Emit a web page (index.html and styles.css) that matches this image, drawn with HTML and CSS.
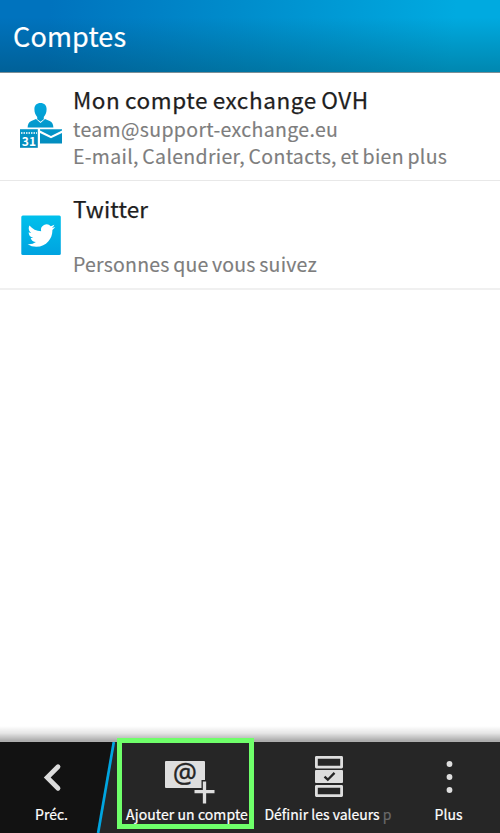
FILE: index.html
```html
<!DOCTYPE html>
<html lang="fr">
<head>
<meta charset="utf-8">
<title>Comptes</title>
<link rel="stylesheet" href="styles.css">
</head>
<body>
<div class="screen">
  <header class="header"><h1 class="title">Comptes</h1></header>
  <main class="accounts">
    <section class="account">
      <svg class="account-icon" viewBox="0 0 44 48" width="44" height="48">
        <defs><linearGradient id="blue" gradientUnits="userSpaceOnUse" x1="0" y1="0" x2="0" y2="48"><stop offset="0" stop-color="#03a9df"/><stop offset="1" stop-color="#0389ba"/></linearGradient></defs>
        <g fill="url(#blue)">
          <path d="M20.500 2c3.700 0 6.100 2.300 6.100 6.100 0 3.500-1 6-2.800 7.800v2.300l-3.300 2.500-3.300-2.500v-2.300c-1.800-1.800-2.800-4.300-2.800-7.800C14.400 4.300 16.800 2 20.500 2z"/>
          <path d="M16 17.900l4.500 4.100 4.500-4.100 4.700 2c2.600 1.300 3.500 3.200 3.700 6.500H7.600c.2-3.300 1.100-5.200 3.700-6.500z"/>
          <path d="M0 28.200h17.800v18.600H0z"/>
          <path d="M20 28.200h22v1.400l-11 5.300-11-5.300z"/>
          <path d="M20 31.900l11 5.300 11-5.300v10.500H20z"/>
        </g>
        <path d="M1 32h16" stroke="#fff" stroke-width="1.500" stroke-dasharray="1.500 1"/>
        <text class="calendar-day" x="8.900" y="44.500" text-anchor="middle">31</text>
      </svg>
      <div class="details">
        <h2 class="name exchange">Mon compte exchange OVH</h2>
        <p class="line address">team@support-exchange.eu</p>
        <p class="line services">E-mail, Calendrier, Contacts, et bien plus</p>
      </div>
    </section>
    <section class="account">
      <svg class="account-icon" viewBox="0 0 44 48" width="44" height="48">
        <defs><linearGradient id="sky" x1="0" y1="0" x2="0" y2="1"><stop offset="0" stop-color="#00c0ec"/><stop offset="1" stop-color="#00a3e0"/></linearGradient></defs>
        <rect x="1.300" y="5.500" width="39.500" height="39.500" rx="1.500" fill="url(#sky)"/>
        <path fill="#fff" transform="translate(7.600 11.800) scale(1.150)" d="M23.953 4.570a10 10 0 01-2.825.775 4.958 4.958 0 002.163-2.723c-.951.555-2.005.959-3.127 1.184a4.920 4.920 0 00-8.384 4.482C7.690 8.095 4.067 6.130 1.640 3.162a4.822 4.822 0 00-.666 2.475c0 1.710.87 3.213 2.188 4.096a4.904 4.904 0 01-2.228-.616v.06a4.923 4.923 0 003.946 4.827 4.996 4.996 0 01-2.212.085 4.936 4.936 0 004.604 3.417 9.867 9.867 0 01-6.102 2.105c-.39 0-.779-.023-1.170-.067a13.995 13.995 0 007.557 2.209c9.053 0 13.998-7.496 13.998-13.985 0-.21 0-.42-.015-.63A9.935 9.935 0 0024 4.590z"/>
      </svg>
      <div class="details">
        <h2 class="name twitter">Twitter</h2>
        <p class="line">&nbsp;</p>
        <p class="line follows">Personnes que vous suivez</p>
      </div>
    </section>
  </main>
  <nav class="toolbar">
    <a class="action back">
      <svg class="edge" viewBox="0 0 20 91" width="20" height="91"><path d="M20 0v91H3L19 0z" fill="#262626"/><path d="M18.800 0L3.100 91" fill="none" stroke="#00a5e0" stroke-width="2.700"/></svg>
      <svg class="glyph" viewBox="0 0 48 48" width="48" height="48"><path d="M30 14.700L19.200 25.500 30 36.300" fill="none" stroke="#dcdcdc" stroke-width="4.800" stroke-linecap="round"/></svg>
      <span class="label prec">Préc.</span>
    </a>
    <a class="action add">
      <svg class="glyph" viewBox="0 0 56 48" width="56" height="48">
        <rect x="6" y="9" width="40" height="27" rx="1" fill="#dedede"/>
        <text class="at" x="26" y="30.500" text-anchor="middle">@</text>
        <path d="M45.500 28v12M34.500 39.700h12" stroke="#262626" stroke-width="6"/>
        <path d="M45.500 29.500v22M35.500 39.700h20" stroke="#dedede" stroke-width="3.300"/>
      </svg>
      <span class="label ajouter">Ajouter un compte</span>
      <span class="highlight"></span>
    </a>
    <a class="action defaults">
      <svg class="glyph" viewBox="0 0 48 48" width="48" height="48">
        <path d="M12.400 5.400h25.200v9.700h-25.200zM12.400 34.400h25.200v9.200h-25.200z" fill="none" stroke="#dedede" stroke-width="2.800" stroke-linejoin="round"/>
        <rect x="11" y="18" width="28" height="13" rx="1" fill="#dedede"/>
        <path d="M20.500 24.600l3.300 3.100 6.700-6.800" fill="none" stroke="#262626" stroke-width="2.300"/>
      </svg>
      <span class="label definir">Définir les valeurs <span class="fade">p</span></span>
    </a>
    <a class="action more">
      <svg class="glyph" viewBox="0 0 48 48" width="48" height="48"><g fill="#dedede"><circle cx="24.500" cy="12" r="2.900"/><circle cx="24.500" cy="25" r="2.900"/><circle cx="24.500" cy="38" r="2.900"/></g></svg>
      <span class="label plus">Plus</span>
    </a>
  </nav>
</div>
</body>
</html>
```
FILE: styles.css
```css
* { box-sizing: border-box; margin: 0; padding: 0; }
body { background: #fff; font-family: "Noto Sans CJK SC", "Noto Sans", sans-serif; }
.screen { display: flex; flex-direction: column; width: 500px; height: 833px; overflow: hidden; }
.header {
  height: 73px;
  padding: 16px 13px 0;
  border-bottom: 1px solid #7c8f96;
  background: linear-gradient(to bottom, rgba(0,45,55,0) 24%, rgba(0,55,65,.3) 100%), linear-gradient(97deg, #0073be 10%, #008dcc 48%, #00aae0 90%);
}
.title { color: #fff; font-size: 27px; font-weight: 400; line-height: 40px; white-space: nowrap; letter-spacing: .15px; -webkit-text-stroke: .2px #fff; }
.accounts { flex: 1; }
.account { display: flex; height: 108px; padding: 12px 0 0 20px; border-bottom: 1px solid #e8e8e8; }
.account + .account { height: 109px; padding-top: 13px; border-bottom: 2px solid #f0f0f0; }
.account-icon { flex: none; margin-top: 16px; }
.details { padding-left: 9px; white-space: nowrap; }
.name { height: 29px; color: #1e1e1e; font-size: 22.500px; font-weight: 400; line-height: 29px; -webkit-text-stroke: .25px #1e1e1e; }
.exchange { height: 30px; letter-spacing: .58px; word-spacing: -1px; }
.twitter { letter-spacing: .15px; }
.line { height: 27px; color: #7d7d7d; font-size: 19.500px; line-height: 27px; -webkit-text-stroke: .15px #7d7d7d; }
.address { letter-spacing: .34px; }
.services { letter-spacing: .31px; word-spacing: -1.100px; }
.follows { letter-spacing: .2px; word-spacing: -1px; }
.calendar-day { font-size: 12px; font-weight: 700; fill: #fff; }
.toolbar { position: relative; display: flex; height: 91px; background: #262626; }
.toolbar::before { content: ""; position: absolute; left: 0; right: 0; top: -16px; height: 16px; background: linear-gradient(to bottom, rgba(0,0,0,0), rgba(0,0,0,.1) 45%, rgba(0,0,0,.32) 90%); }
.action { position: relative; display: flex; flex-direction: column; align-items: center; height: 91px; padding-top: 10px; color: #fff; }
.back { width: 115px; padding-right: 12px; background: #121212; }
.add { width: 144px; }
.defaults { width: 138px; }
.more { width: 103px; }
.edge { position: absolute; top: 0; right: 0; }
.glyph { flex: none; overflow: visible; }
.at { font-family: "Noto Sans", sans-serif; font-size: 27px; fill: #262626; stroke: #262626; stroke-width: .3px; }
.label { height: 20px; margin-top: 4px; font-size: 14px; line-height: 20px; white-space: nowrap; -webkit-text-stroke: .2px; }
.ajouter { letter-spacing: .08px; }
.fade { color: #6a6a6a; }
.highlight { position: absolute; left: 2px; top: -4px; width: 137px; height: 91px; border: 5px solid #6fff6a; }
```
